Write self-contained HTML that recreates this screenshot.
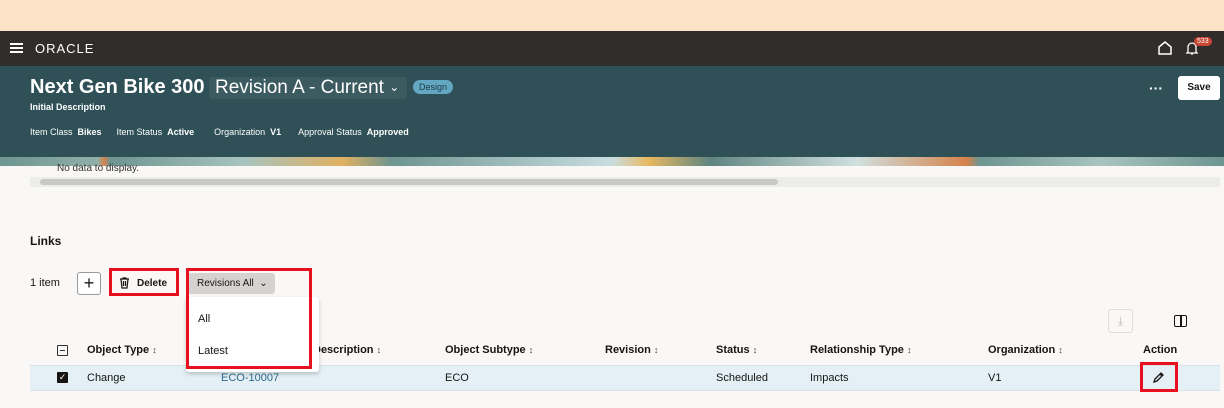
<!DOCTYPE html>
<html><head><style>
*{margin:0;padding:0;box-sizing:border-box}
body{width:1224px;height:408px;overflow:hidden;background:#f9f8f6;font-family:"Liberation Sans",sans-serif;color:#161513;position:relative;font-size:11px}
.a{position:absolute;white-space:nowrap}
.red{position:absolute;border:3px solid #e8101e;z-index:6}
.s{font-size:9px;font-weight:normal;color:#444}
</style></head><body>
<div class="a" style="left:0;top:0;width:1224px;height:31px;background:#fce3c8"></div>
<div class="a" style="left:0;top:31px;width:1224px;height:35px;background:#312d2a"></div>
<div class="a" style="left:10px;top:43px;width:13px;height:2px;background:#fff;box-shadow:0 4px 0 #fff,0 8px 0 #fff"></div>
<div class="a" style="left:35px;top:41px;color:#fff;font-size:13px;letter-spacing:1px">ORACLE</div>
<svg class="a" style="left:1157px;top:40px" width="16" height="16" viewBox="0 0 16 16"><path d="M2 7L8 2l6 5v7H2z" fill="none" stroke="#fff" stroke-width="1.5"/></svg>
<svg class="a" style="left:1185px;top:40px" width="14" height="16" viewBox="0 0 14 16"><path d="M3 12V7a4 4 0 0 1 8 0v5l1 1H2zM6 14h2" fill="none" stroke="#fff" stroke-width="1.3"/></svg>
<div class="a" style="left:1194px;top:37px;background:#c74634;color:#fff;font-size:7px;border-radius:6px;padding:1px 3px">533</div>
<div class="a" style="left:0;top:66px;width:1224px;height:92px;background:#2f5057"></div>
<div class="a" style="left:0;top:157px;width:1224px;height:9px;background:linear-gradient(90deg,#6e9590 0,#8fb0a8 8%,#d6824a 8.5%,#6e9590 9%,#a8c4bf 20%,#e0b060 28%,#6e9590 32%,#c8dde0 50%,#e8b860 53%,#5f8580 58%,#d0e0e0 70%,#d6824a 79%,#6e9590 80%,#a8c4bf 90%,#6e9590 100%)"></div>
<div class="a" style="left:30px;top:76px;color:#fff;font-size:20px;font-weight:bold">Next Gen Bike 300</div>
<div class="a" style="left:209px;top:77px;width:198px;height:22px;background:#3b5b61;border-radius:3px"></div>
<div class="a" style="left:215px;top:77px;color:#fff;font-size:19px">Revision A - Current <span style="font-size:12px;position:relative;top:-2px">&#8964;</span></div>
<div class="a" style="left:413px;top:80px;background:#64a7c2;color:#1d3b45;font-size:9px;border-radius:8px;padding:2px 6px">Design</div>
<div class="a" style="left:30px;top:102px;color:#fff;font-size:9px;font-weight:bold">Initial Description</div>
<div class="a" style="left:30px;top:127px;color:#fff;font-size:9px">Item Class&nbsp; <b>Bikes</b>&nbsp;&nbsp;&nbsp;&nbsp;&nbsp; Item Status&nbsp; <b>Active</b>&nbsp;&nbsp;&nbsp;&nbsp;&nbsp;&nbsp;&nbsp; Organization&nbsp; <b>V1</b>&nbsp;&nbsp;&nbsp;&nbsp;&nbsp;&nbsp; Approval Status&nbsp; <b>Approved</b></div>
<div class="a" style="left:1149px;top:80px;color:#fff;font-size:14px;font-weight:bold">···</div>
<div class="a" style="left:1178px;top:76px;width:42px;height:24px;background:#fff;border-radius:3px;font-size:10px;font-weight:bold;text-align:center;line-height:24px">Save</div>
<div class="a" style="left:57px;top:163px;font-size:10px;color:#333">No data to display.</div>
<div class="a" style="left:30px;top:177px;width:1190px;height:10px;background:#ececea"></div>
<div class="a" style="left:40px;top:179px;width:738px;height:6px;background:#c9c9c7;border-radius:3px"></div>
<div class="a" style="left:30px;top:234px;font-size:12px;font-weight:bold">Links</div>
<div class="a" style="left:30px;top:277px;font-size:11px">1 item</div>
<div class="a" style="left:77px;top:272px;width:24px;height:23px;border:1px solid #999;border-radius:3px;background:#fff;text-align:center;font-size:18px;line-height:20px">+</div>
<div class="red" style="left:109px;top:268px;width:70px;height:28px"></div>
<svg class="a" style="left:119px;top:277px" width="11" height="12" viewBox="0 0 11 12"><path d="M1 2h9M4 2V1h3v1M2 2l1 9h5l1-9M4.5 4v5M6.5 4v5" fill="none" stroke="#161513" stroke-width="1.2"/></svg>
<div class="a" style="left:137px;top:278px;font-size:10px;font-weight:bold">Delete</div>
<div class="a" style="left:188px;top:273px;width:87px;height:21px;background:#d4d3d1;border-radius:3px;font-size:10px;line-height:21px;padding-left:9px">Revisions All&nbsp; &#8964;</div>
<div class="a" style="left:57px;top:345px;width:11px;height:11px;border:1.3px solid #333;border-radius:1px"></div>
<div class="a" style="left:60px;top:350px;width:5px;height:1.3px;background:#333"></div>
<div class="a" style="left:87px;top:344px;font-size:11px;font-weight:bold">Object Type <span class="s">↕</span></div>
<div class="a" style="left:313px;top:344px;font-size:11px;font-weight:bold">Description <span class="s">↕</span></div>
<div class="a" style="left:445px;top:344px;font-size:11px;font-weight:bold">Object Subtype <span class="s">↕</span></div>
<div class="a" style="left:605px;top:344px;font-size:11px;font-weight:bold">Revision <span class="s">↕</span></div>
<div class="a" style="left:716px;top:344px;font-size:11px;font-weight:bold">Status <span class="s">↕</span></div>
<div class="a" style="left:810px;top:344px;font-size:11px;font-weight:bold">Relationship Type <span class="s">↕</span></div>
<div class="a" style="left:988px;top:344px;font-size:11px;font-weight:bold">Organization <span class="s">↕</span></div>
<div class="a" style="left:1143px;top:344px;font-size:11px;font-weight:bold">Action</div>
<div class="a" style="left:30px;top:365px;width:1190px;height:26px;background:#e4f0f6;border-top:1px solid #d8e2e6;border-bottom:1px solid #d8e2e6"></div>
<div class="a" style="left:57px;top:372px;width:11px;height:11px;background:#161513;border-radius:1px;color:#fff;font-size:9px;line-height:11px;text-align:center">✓</div>
<div class="a" style="left:87px;top:372px">Change</div>
<div class="a" style="left:221px;top:372px;color:#2b6b8a">ECO-10007</div>
<div class="a" style="left:445px;top:372px">ECO</div>
<div class="a" style="left:716px;top:372px">Scheduled</div>
<div class="a" style="left:810px;top:372px">Impacts</div>
<div class="a" style="left:988px;top:372px">V1</div>
<div class="a" style="left:186px;top:297px;width:133px;height:75px;background:#fff;box-shadow:0 2px 4px rgba(0,0,0,.2);border-radius:3px;z-index:5"></div>
<div class="red" style="left:186px;top:268px;width:126px;height:101px"></div>
<div class="a" style="left:198px;top:313px;font-size:11px;z-index:7">All</div>
<div class="a" style="left:198px;top:345px;font-size:11px;z-index:7">Latest</div>
<div class="a" style="left:1108px;top:309px;width:25px;height:24px;border:1px solid #ddd;border-radius:3px;color:#bbb;text-align:center;line-height:22px;font-size:12px">⤓</div>
<div class="a" style="left:1174px;top:315px;width:13px;height:12px;border:1.5px solid #161513;border-radius:2px"></div>
<div class="a" style="left:1180px;top:316px;width:1.5px;height:10px;background:#161513"></div>
<div class="red" style="left:1140px;top:362px;width:38px;height:30px"></div>
<svg class="a" style="left:1152px;top:371px" width="13" height="13" viewBox="0 0 13 13"><path d="M2 11l1-3 6-6 2 2-6 6zM8 3l2 2" fill="none" stroke="#161513" stroke-width="1.3"/></svg>
</body></html>
